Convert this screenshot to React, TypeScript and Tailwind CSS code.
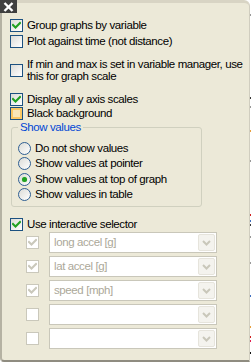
import React from "react";

const FONT = "font-['Liberation_Sans',Arial,sans-serif] text-[11.5px] tracking-[-0.4px] text-black";

function CheckMark({ color }: { color: string }) {
  return (
    <svg width="9" height="9" viewBox="0 0 9 9" className="block">
      <path d="M1 4 L3.5 6.5 L8 2" fill="none" stroke={color} strokeWidth="2" strokeLinecap="square" />
    </svg>
  );
}

function Check({ checked, hover, disabled }: { checked?: boolean; hover?: boolean; disabled?: boolean }) {
  if (disabled) {
    return (
      <div className="w-[13px] h-[13px] shrink-0 border border-[#cac8bb] bg-white flex items-center justify-center">
        {checked && <CheckMark color="#cac8bb" />}
      </div>
    );
  }
  return (
    <div className="w-[13px] h-[13px] shrink-0 border border-[#1c5180] bg-gradient-to-br from-[#dcdcd7] to-white flex items-center justify-center">
      {hover && <div className="w-[11px] h-[11px] border-2 border-[#fbc865] bg-[#f8e6b8]" />}
      {checked && <CheckMark color="#21a121" />}
    </div>
  );
}

function Radio({ checked }: { checked?: boolean }) {
  return (
    <div className="w-[13px] h-[13px] shrink-0 rounded-full border border-[#2f5f93] bg-gradient-to-br from-[#dcdcd7] to-white flex items-center justify-center">
      {checked && <div className="w-[5px] h-[5px] rounded-full bg-[#21a121] shadow-[0_0_1px_#7fd07f]" />}
    </div>
  );
}

function CheckRow({ label, checked, hover, className }: { label: string; checked?: boolean; hover?: boolean; className?: string }) {
  return (
    <div className={`flex items-center gap-[4px] pl-[9px] h-[13px] ${className ?? ""}`}>
      <Check checked={checked} hover={hover} />
      <span className="leading-[13px] whitespace-nowrap">{label}</span>
    </div>
  );
}

function Combo({ text }: { text: string }) {
  return (
    <div className="w-[168px] h-[21px] border border-[#c9c7ba] bg-white flex items-center justify-between">
      <span className="pl-[4px] text-[#aca899] whitespace-nowrap">{text}</span>
      <div className="w-[17px] h-[17px] mr-[1px] rounded-[2px] bg-[#f4f3ee] border border-[#e6e4dc] flex items-center justify-center">
        <svg width="9" height="6" viewBox="0 0 9 6">
          <path d="M1 1 L4.5 4.5 L8 1" fill="none" stroke="#c9c7ba" strokeWidth="2" />
        </svg>
      </div>
    </div>
  );
}

const radios = [
  { label: "Do not show values" },
  { label: "Show values at pointer" },
  { label: "Show values at top of graph", checked: true },
  { label: "Show values in table" },
];

const selectors = [
  { text: "long accel [g]", checked: true },
  { text: "lat accel [g]", checked: true },
  { text: "speed [mph]", checked: true },
  { text: "", checked: false },
  { text: "", checked: false },
];

const chartDots = [
  { y: 14, c: "#9a9a9a" }, { y: 97, c: "#3a3a3a" }, { y: 106, c: "#9a9a9a" },
  { y: 130, c: "#e8a040" }, { y: 160, c: "#9a9a9a" }, { y: 214, c: "#d02020" },
  { y: 220, c: "#4070c0" }, { y: 224, c: "#3a3a3a" }, { y: 236, c: "#9a9a9a" },
  { y: 262, c: "#9a9a9a" }, { y: 295, c: "#4070c0" }, { y: 326, c: "#e8a040" },
  { y: 336, c: "#d02020" }, { y: 340, c: "#e02050" }, { y: 352, c: "#111111" },
];

export default function App() {
  return (
    <div className={`relative w-[251px] h-[363px] bg-white overflow-hidden ${FONT}`}>
      {chartDots.map((d, i) => (
        <div key={i} className="absolute right-0 w-[1px] h-[2px]" style={{ top: d.y, background: d.c }} />
      ))}

      <div className="w-[250px] h-[362px] bg-[#ece9d8] border-t-[3px] border-t-[#d8d4c4] border-l-2 border-l-[#b5b2a3] border-b-2 border-b-[#8f8c80] border-r border-r-[#d0cdbf] rounded-tr-[6px] rounded-bl-[4px] flex flex-col">
        <div className="w-[17px] h-[13px] -mt-[3px] -ml-[2px] bg-[#3f3f3f] flex items-center justify-center">
          <svg width="11" height="10" viewBox="0 0 11 10">
            <path d="M1.5 1 L9.5 9 M9.5 1 L1.5 9" stroke="white" strokeWidth="2.4" />
          </svg>
        </div>

        <CheckRow className="mt-[6px] -ml-[1px]" label="Group graphs by variable" checked />
        <CheckRow className="mt-[3px] -ml-[1px]" label="Plot against time (not distance)" />

        <div className="mt-[9px] -ml-[1px] flex items-center gap-[4px] pl-[9px] h-[26px]">
          <Check />
          <span className="leading-[12px] whitespace-nowrap">
            If min and max is set in variable manager, use
            <br />
            this for graph scale
          </span>
        </div>

        <CheckRow className="mt-[10px] -ml-[1px]" label="Display all y axis scales" checked />
        <CheckRow className="mt-[1px] -ml-[1px]" label="Black background" hover />

        <div className="relative mt-[7px] ml-[9px] w-[191px] h-[80px] border border-[#d0d0bf] rounded-[3px]">
          <span className="absolute -top-[7px] left-[6px] px-[2px] bg-[#ece9d8] text-[#0046d5] leading-[12px]">Show values</span>
          <div className="flex flex-col pt-[13px] pl-[6px]">
            {radios.map((r) => (
              <div key={r.label} className="flex items-center gap-[4px] h-[15.33px]">
                <Radio checked={r.checked} />
                <span className="whitespace-nowrap">{r.label}</span>
              </div>
            ))}
          </div>
        </div>

        <CheckRow className="mt-[11px] -ml-[1px]" label="Use interactive selector" checked />

        <div className="flex flex-col gap-[3px] mt-[1px] pl-[24px]">
          {selectors.map((s, i) => (
            <div key={i} className="flex items-center gap-[10px]">
              <Check checked={s.checked} disabled />
              <Combo text={s.text} />
            </div>
          ))}
        </div>
      </div>
    </div>
  );
}
